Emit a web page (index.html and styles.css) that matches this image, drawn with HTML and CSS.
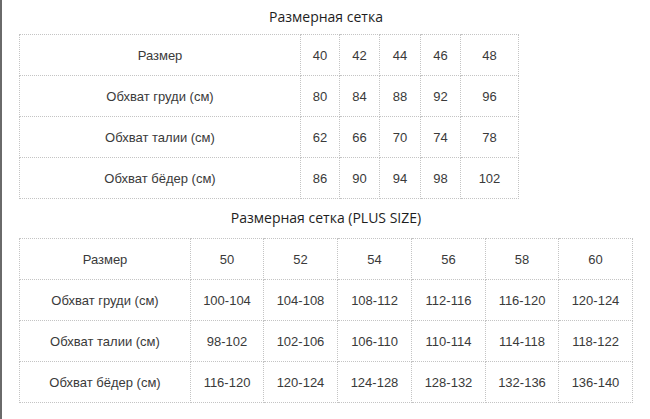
FILE: index.html
```html
<!DOCTYPE html>
<html lang="ru">
<head>
<meta charset="utf-8">
<link rel="stylesheet" href="styles.css">
</head>
<body>
<div class="page">
  <h2 class="title t1">Размерная сетка</h2>
  <table class="grid g1">
    <colgroup>
      <col style="width:281px"><col style="width:39px"><col style="width:40px"><col style="width:41px"><col style="width:40px"><col style="width:58px">
    </colgroup>
    <tr><td>Размер</td><td>40</td><td>42</td><td>44</td><td>46</td><td>48</td></tr>
    <tr><td>Обхват груди (см)</td><td>80</td><td>84</td><td>88</td><td>92</td><td>96</td></tr>
    <tr><td>Обхват талии (см)</td><td>62</td><td>66</td><td>70</td><td>74</td><td>78</td></tr>
    <tr><td>Обхват бёдер (см)</td><td>86</td><td>90</td><td>94</td><td>98</td><td>102</td></tr>
  </table>
  <h2 class="title t2">Размерная сетка (PLUS SIZE)</h2>
  <table class="grid g2">
    <colgroup>
      <col style="width:171px"><col style="width:73px"><col style="width:74px"><col style="width:74px"><col style="width:74px"><col style="width:73px"><col style="width:74px">
    </colgroup>
    <tr><td>Размер</td><td>50</td><td>52</td><td>54</td><td>56</td><td>58</td><td>60</td></tr>
    <tr><td>Обхват груди (см)</td><td>100-104</td><td>104-108</td><td>108-112</td><td>112-116</td><td>116-120</td><td>120-124</td></tr>
    <tr><td>Обхват талии (см)</td><td>98-102</td><td>102-106</td><td>106-110</td><td>110-114</td><td>114-118</td><td>118-122</td></tr>
    <tr><td>Обхват бёдер (см)</td><td>116-120</td><td>120-124</td><td>124-128</td><td>128-132</td><td>132-136</td><td>136-140</td></tr>
  </table>
</div>
</body>
</html>
```
FILE: styles.css
```css
html, body {
  margin: 0;
  padding: 0;
  background: #ffffff;
}
body {
  width: 650px;
  height: 419px;
  overflow: hidden;
  border-left: 2px solid #6a6a6a;
  box-sizing: border-box;
}
.page {
  padding: 0 0 0 17px;
  display: flex;
  flex-direction: column;
  align-items: flex-start;
}
.title {
  margin: 0;
  font-family: "Open Sans", sans-serif;
  font-weight: 400;
  font-size: 14px;
  color: #1e1e1e;
  align-self: stretch;
  text-align: center;
  padding-right: 17px;
}
.t1 {
  height: 34px;
  line-height: 34px;
}
.t2 {
  height: 39px;
  line-height: 38px;
}
.grid {
  border-collapse: collapse;
  table-layout: fixed;
  font-family: "Liberation Sans", Arial, sans-serif;
  font-size: 13px;
  color: #3a3a3a;
}
.grid td {
  border: 1px dotted #c4c4c4;
  text-align: center;
  height: 40px;
  padding: 0;
}
```
